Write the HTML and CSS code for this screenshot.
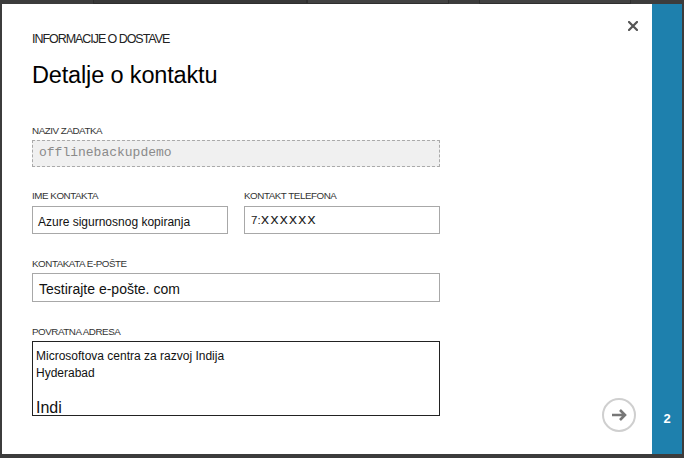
FILE: index.html
```html
<!DOCTYPE html>
<html lang="hr">
<head>
<meta charset="utf-8">
<title>Detalje o kontaktu</title>
<link rel="stylesheet" href="styles.css">
</head>
<body>
<div class="topstrip">
  <span class="seg seg-a"></span>
  <span class="seg seg-b"></span>
  <span class="seg seg-c"></span>
</div>
<div class="frame">
  <div class="dialog">
    <button class="close" aria-label="Zatvori">
      <svg width="10" height="10" viewBox="0 0 10 10"><path d="M1 1L9 9M9 1L1 9" stroke="#555" stroke-width="2.2" stroke-linecap="square"/></svg>
    </button>
    <div class="subtitle">INFORMACIJE O DOSTAVE</div>
    <h1 class="title">Detalje o kontaktu</h1>

    <div class="field">
      <div class="label">NAZIV ZADATKA</div>
      <div class="input input-disabled">offlinebackupdemo</div>
    </div>

    <div class="field row">
      <div class="col">
        <div class="label">IME KONTAKTA</div>
        <div class="input input-mid input-name">Azure sigurnosnog kopiranja</div>
      </div>
      <div class="col">
        <div class="label">KONTAKT TELEFONA</div>
        <div class="input input-mid input-phone"><span class="pre">7:</span><span class="mono">xxxxxx</span></div>
      </div>
    </div>

    <div class="field field-email">
      <div class="label">KONTAKATA E-POŠTE</div>
      <div class="input input-email">Testirajte e-pošte. com</div>
    </div>

    <div class="field field-address">
      <div class="label">POVRATNA ADRESA</div>
      <div class="textarea">
        <div class="line">Microsoftova centra za razvoj Indija</div>
        <div class="line">Hyderabad</div>
        <div class="line">&nbsp;</div>
        <div class="line big">Indi</div>
      </div>
    </div>

    <button class="next" aria-label="Dalje">
      <svg width="18" height="14" viewBox="0 0 18 14"><path d="M2 7H15M10 2L15 7L10 12" fill="none" stroke="#777" stroke-width="2.6" stroke-linejoin="miter"/></svg>
    </button>
  </div>
  <div class="step">
    <span class="step-num">2</span>
  </div>
</div>
</body>
</html>
```
FILE: styles.css
```css
html, body {
  margin: 0;
  padding: 0;
}
body {
  width: 684px;
  height: 458px;
  background: #3c3c3c;
  font-family: "Liberation Sans", Arial, sans-serif;
  color: #222;
  overflow: hidden;
}
.topstrip {
  height: 4px;
  display: flex;
  position: relative;
}
.seg {
  display: block;
  height: 3px;
  border: 1px solid #2e2e2e;
  border-top: 0;
  background: #424242;
}
.seg-a { margin-left: 93px; width: 212px; background: #383838; }
.seg-b { width: 140px; }
.seg-c { margin-left: 30px; width: 150px; }

.frame {
  display: flex;
  margin-left: 2px;
  height: 450px;
}
.dialog {
  position: relative;
  width: 650px;
  height: 450px;
  background: #fff;
  box-sizing: border-box;
  padding: 27px 0 0 30px;
}
.step {
  width: 30px;
  height: 450px;
  background: #1e80ad;
  display: flex;
  flex-direction: column;
  justify-content: flex-end;
  align-items: center;
  padding-bottom: 28px;
  box-sizing: border-box;
}
.step-num {
  color: #fff;
  font-weight: bold;
  font-size: 13px;
  line-height: 15px;
}
.close {
  position: absolute;
  top: 17px;
  right: 14px;
  width: 10px;
  height: 10px;
  padding: 0;
  border: 0;
  background: none;
  display: block;
}
.close svg { display: block; }

.subtitle {
  font-size: 12.5px;
  line-height: 15px;
  letter-spacing: -1.05px;
  color: #222;
  margin-top: 1px;
}
.title {
  margin: 14px 0 0 0;
  font-size: 23.5px;
  line-height: 28px;
  font-weight: normal;
  color: #000;
  letter-spacing: -0.15px;
}
.field {
  margin-top: 23px;
  width: 408px;
}
.title + .field { margin-top: 36px; }
.field-email { margin-top: 24px; }
.field-address { margin-top: 24px; }
.row {
  display: flex;
  gap: 16px;
}
.col { width: 196px; }
.label {
  font-size: 9.8px;
  line-height: 11px;
  letter-spacing: -0.45px;
  color: #333;
  margin-bottom: 4px;
}
.row .label { margin-bottom: 5px; }
.input {
  box-sizing: border-box;
  border: 1px solid #a8a8a8;
  background: #fff;
  white-space: nowrap;
  overflow: hidden;
}
.input-disabled {
  height: 27px;
  border: 1px dashed #aaa;
  background: #f0f0f0;
  color: #8a8a8a;
  font-family: "Liberation Mono", "Courier New", monospace;
  font-size: 13px;
  line-height: 24px;
  padding-left: 6px;
}
.input-mid {
  height: 28px;
  width: 196px;
}
.input-name {
  font-size: 12px;
  line-height: 21px;
  padding: 5px 0 0 5px;
  color: #111;
}
.input-phone {
  padding: 0 0 0 6px;
  line-height: 24px;
  color: #222;
}
.pre {
  font-size: 11.5px;
}
.mono {
  font-family: "Liberation Mono", "Courier New", monospace;
  font-size: 15px;
  font-weight: normal;
  letter-spacing: 0.3px;
}
.input-email {
  height: 29px;
  font-size: 14px;
  line-height: 24px;
  padding: 3px 0 0 6px;
  color: #111;
}
.textarea {
  box-sizing: border-box;
  height: 75px;
  border: 1px solid #222;
  padding: 6px 0 0 3px;
  overflow: hidden;
  color: #111;
}
.line {
  font-size: 12px;
  line-height: 17px;
  white-space: nowrap;
}
.line.big {
  font-size: 16px;
  line-height: 18px;
}
.next {
  position: absolute;
  right: 16px;
  bottom: 22px;
  width: 34px;
  height: 34px;
  box-sizing: border-box;
  border: 2px solid #cfcfcf;
  border-radius: 50%;
  background: #fff;
  padding: 0;
  display: flex;
  align-items: center;
  justify-content: center;
}
.next svg { display: block; }
```
